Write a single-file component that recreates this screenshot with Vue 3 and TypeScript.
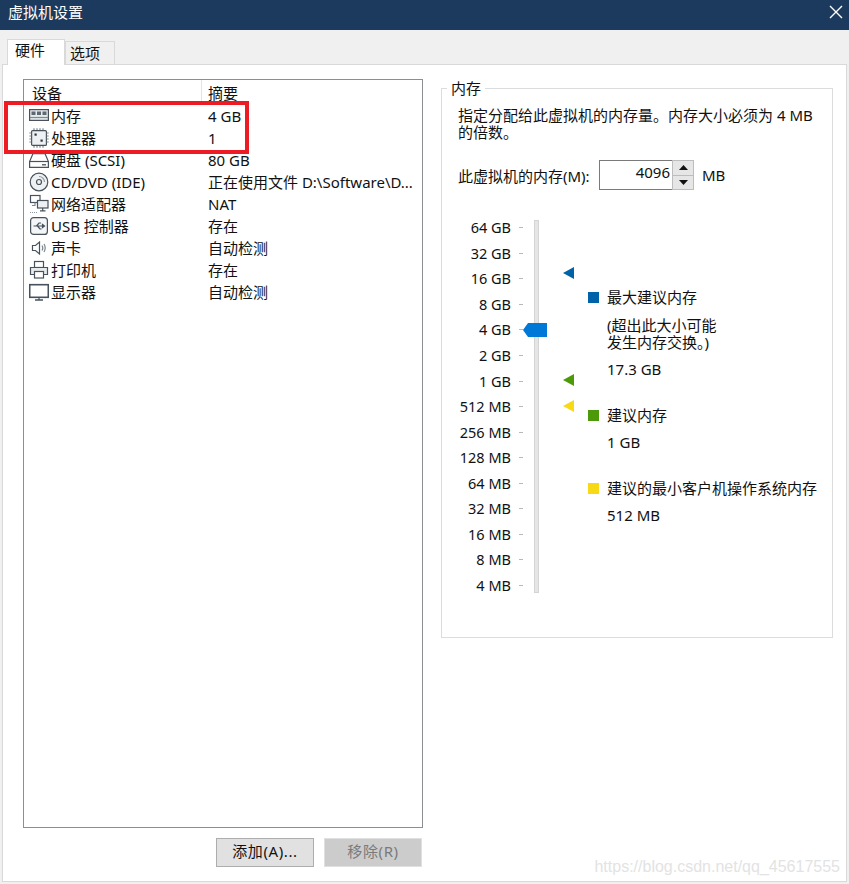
<script setup lang="ts">
interface Device { name: string; summary: string; icon: string }
const devices: Device[] = [
  { name: '内存', summary: '4 GB', icon: 'mem' },
  { name: '处理器', summary: '1', icon: 'cpu' },
  { name: '硬盘 (SCSI)', summary: '80 GB', icon: 'disk' },
  { name: 'CD/DVD (IDE)', summary: '正在使用文件 D:\\Software\\D...', icon: 'cd' },
  { name: '网络适配器', summary: 'NAT', icon: 'net' },
  { name: 'USB 控制器', summary: '存在', icon: 'usb' },
  { name: '声卡', summary: '自动检测', icon: 'sound' },
  { name: '打印机', summary: '存在', icon: 'print' },
  { name: '显示器', summary: '自动检测', icon: 'mon' },
]
const scale: string[] = ['64 GB','32 GB','16 GB','8 GB','4 GB','2 GB','1 GB','512 MB','256 MB','128 MB','64 MB','32 MB','16 MB','8 MB','4 MB']
</script>

<template>
  <div class="win">
    <header class="title">
      <span>虚拟机设置</span>
      <svg class="close" width="14" height="14" viewBox="0 0 14 14"><path d="M1 1L13 13M13 1L1 13" stroke="#fff" stroke-width="1.4" fill="none"/></svg>
    </header>
    <nav class="tabs">
      <div class="tab active">硬件</div>
      <div class="tab">选项</div>
    </nav>
    <main class="panel">
      <section class="left">
        <div class="list">
          <div class="head">
            <div class="h1">设备</div>
            <div class="h2">摘要</div>
          </div>
          <div v-for="d in devices" :key="d.name" class="row">
            <svg class="ico" width="20" height="20" viewBox="0 0 20 20" fill="none" stroke="#47525c" stroke-width="1.2">
              <template v-if="d.icon === 'mem'">
                <rect x="0.6" y="3.6" width="18.8" height="10.8" fill="#e6eaed"/>
                <rect x="2.5" y="5.5" width="4" height="3.5" fill="#5d6872" stroke="none"/>
                <rect x="8" y="5.5" width="4" height="3.5" fill="#5d6872" stroke="none"/>
                <rect x="13.5" y="5.5" width="4" height="3.5" fill="#5d6872" stroke="none"/>
                <path d="M1 11.5H19" stroke="#7f8992"/>
              </template>
              <template v-else-if="d.icon === 'cpu'">
                <rect x="2.6" y="2.6" width="14.8" height="14.8" rx="1" fill="#eef1f3"/>
                <path d="M5 0.3V2M8 0.3V2M11 0.3V2M14 0.3V2M5 18V19.7M8 18V19.7M11 18V19.7M14 18V19.7M0.3 5H2.5M0.3 8H2.5M0.3 11H2.5M0.3 14H2.5M17.5 5H19.7M17.5 8H19.7M17.5 11H19.7M17.5 14H19.7" stroke="#7c8790"/>
                <rect x="5.5" y="5.5" width="2.2" height="2.2" fill="#2c343b" stroke="none"/>
                <rect x="11.5" y="11.5" width="2.2" height="2.2" fill="#2c343b" stroke="none"/>
              </template>
              <template v-else-if="d.icon === 'disk'">
                <path d="M4 3.6H16L19.4 11.5V17.4H0.6V11.5Z" fill="#fff"/>
                <path d="M0.6 11.5H19.4"/>
                <rect x="13" y="14" width="4" height="1.5" fill="#5d6872" stroke="none"/>
              </template>
              <template v-else-if="d.icon === 'cd'">
                <circle cx="10" cy="10" r="8.8" fill="#eef1f3"/>
                <circle cx="10" cy="10" r="2.5"/>
                <path d="M10 4.5A5.5 5.5 0 0 1 15.5 10" stroke="#8f99a1"/>
              </template>
              <template v-else-if="d.icon === 'net'">
                <rect x="1.5" y="1.5" width="9.5" height="7" fill="#fff"/>
                <path d="M6 8.5V11.5H3" stroke="#7c8790"/>
                <rect x="8.5" y="6.5" width="10.5" height="7.5" fill="#eef1f3"/>
                <path d="M13.7 14V16.5M11 16.8H16.5"/>
                <path d="M1 18.5H9" stroke="#8f99a1" stroke-dasharray="1 1"/>
              </template>
              <template v-else-if="d.icon === 'usb'">
                <rect x="1.6" y="1.6" width="16.8" height="16.8" rx="3" fill="#f3f5f6"/>
                <path d="M4.5 10H15.5M15.5 10L13.5 8.5V11.5ZM7.5 10L10 7H12M8.5 10L11 13H12.5"/>
              </template>
              <template v-else-if="d.icon === 'sound'">
                <path d="M3.5 7.5H6.5L10.5 4V16L6.5 12.5H3.5Z" fill="#fff"/>
                <path d="M13 7.5C14 9 14 11 13 12.5M15 6C16.5 8.5 16.5 11.5 15 14" stroke="#7c8790"/>
              </template>
              <template v-else-if="d.icon === 'print'">
                <rect x="5.5" y="1.5" width="9" height="6" fill="#fff"/>
                <path d="M5 14.5H1.5V7.5H18.5V14.5H15" fill="#e6eaed"/>
                <rect x="5.5" y="11.5" width="9" height="6.5" fill="#fff"/>
              </template>
              <template v-else>
                <rect x="0.7" y="2.7" width="18.6" height="12.6" stroke-width="1.6" fill="#fff"/>
                <path d="M6 18H14" stroke-width="1.5"/>
                <path d="M10 16V18"/>
              </template>
            </svg>
            <span class="name">{{ d.name }}</span>
            <span class="sum">{{ d.summary }}</span>
          </div>
        </div>
        <div class="btns">
          <button class="btn">添加(A)...</button>
          <button class="btn off">移除(R)</button>
        </div>
      </section>

      <fieldset class="group">
        <legend>内存</legend>
        <p class="desc">指定分配给此虚拟机的内存量。内存大小必须为 4 MB<br>的倍数。</p>
        <div class="spin-row">
          <span class="spin-label">此虚拟机的内存(M):</span>
          <div class="spin">
            <span class="spin-val">4096</span>
            <div class="arrows">
              <div class="arrow"><svg width="9" height="5" viewBox="0 0 9 5"><path d="M4.5 0L9 5H0Z" fill="#111"/></svg></div>
              <div class="arrow"><svg width="9" height="5" viewBox="0 0 9 5"><path d="M0 0H9L4.5 5Z" fill="#111"/></svg></div>
            </div>
          </div>
          <span class="unit">MB</span>
        </div>
        <div class="mem">
          <ul class="scale">
            <li v-for="s in scale" :key="s"><span>{{ s }}</span><i class="tick"></i></li>
          </ul>
          <div class="track">
            <svg class="mark m-thumb" width="24" height="14" viewBox="0 0 24 14"><path d="M0 7L5 0H24V14H5Z" fill="#0078d7"/></svg>
            <svg class="mark m-max" width="11" height="12" viewBox="0 0 11 12"><path d="M0 6L11 0V12Z" fill="#0063a8"/></svg>
            <svg class="mark m-rec" width="11" height="12" viewBox="0 0 11 12"><path d="M0 6L11 0V12Z" fill="#4c9a0a"/></svg>
            <svg class="mark m-min" width="11" height="12" viewBox="0 0 11 12"><path d="M0 6L11 0V12Z" fill="#f7d916"/></svg>
          </div>
          <div class="legend">
            <div class="lg first"><i class="sq blue"></i>最大建议内存</div>
            <div class="note">(超出此大小可能<br>发生内存交换。)</div>
            <div class="val v1">17.3 GB</div>
            <div class="lg second"><i class="sq green"></i>建议内存</div>
            <div class="val v2">1 GB</div>
            <div class="lg third"><i class="sq yellow"></i>建议的最小客户机操作系统内存</div>
            <div class="val v2">512 MB</div>
          </div>
        </div>
      </fieldset>
      <div class="redbox"></div>
      <div class="mark-text">https://blog.csdn.net/qq_45617555</div>
    </main>
  </div>
</template>

<style>
html, body { margin: 0; background: #f0f0f0; }
</style>

<style scoped>
.win {
  width: 849px;
  height: 884px;
  background: #f0f0f0;
  font-family: "Noto Sans", "Noto Sans CJK SC", sans-serif;
  font-size: 15px;
  color: #111;
  display: flex;
  flex-direction: column;
  overflow: hidden;
}
.title {
  height: 30px;
  box-sizing: border-box;
  flex: none;
  background: #1b3a5e;
  color: #fff;
  display: flex;
  align-items: center;
  justify-content: space-between;
  padding: 0 6px 7px 8px;
  font-size: 15px;
  line-height: 22px;
}
.tabs {
  height: 34px;
  flex: none;
  display: flex;
  align-items: flex-end;
  padding-left: 7px;
  position: relative;
}
.tab {
  width: 50px;
  height: 23px;
  box-sizing: border-box;
  border: 1px solid #d9d9d9;
  border-bottom: 0;
  background: #f0f0f0;
  text-align: center;
  line-height: 22px;
  padding-right: 10px;
}
.tab.active {
  width: 58px;
  height: 26px;
  background: #fff;
  line-height: 21px;
  margin-bottom: -1px;
  position: relative;
  z-index: 1;
  padding-right: 12px;
}
.panel {
  position: relative;
  margin: 0 2px 2px 2px;
  flex: 1;
  background: #fff;
  border: 1px solid #d9d9d9;
  box-sizing: border-box;
  display: flex;
  padding: 14px 13px 0 20px;
  gap: 18px;
}
.left { width: 400px; flex: none; }
.list {
  height: 749px;
  box-sizing: border-box;
  border: 1px solid #8a8f96;
  background: #fff;
}
.head {
  height: 25px;
  display: flex;
  line-height: 26px;
}
.h1 { width: 178px; padding-left: 8px; box-sizing: border-box; border-right: 1px solid #e3e3e3; }
.h2 { padding-left: 6px; }
.row {
  height: 22px;
  display: flex;
  align-items: center;
  line-height: 22px;
  padding-left: 5px;
  white-space: nowrap;
}
.ico { flex: none; margin-right: 2px; }
.name { width: 157px; flex: none; }
.sum { color: #111; }
.btns {
  display: flex;
  justify-content: flex-end;
  gap: 10px;
  margin-top: 10px;
  margin-right: 1px;
}
.btn {
  width: 98px;
  height: 29px;
  padding: 0 0 4px;
  box-sizing: border-box;
  font: inherit;
  letter-spacing: 0.6px;
  line-height: 22px;
  color: #111;
  background: #e1e1e1;
  border: 1px solid #adadad;
  border-radius: 0;
}
.btn.off {
  background: #cccccc;
  border-color: #e0e0e0;
  color: #7a7a7a;
}
.group {
  margin: -1px 0 0 0;
  padding: 0 0 0 16px;
  width: 392px;
  height: 560px;
  box-sizing: border-box;
  flex: none;
  border: 1px solid #dcdcdc;
  min-width: 0;
}
.group legend {
  padding: 0 4px;
  margin-left: -11px;
  line-height: 20px;
}
.desc {
  margin: 0;
  padding-top: 9px;
  line-height: 17px;
  white-space: nowrap;
}
.spin-row {
  display: flex;
  align-items: center;
  margin-top: 19px;
  height: 30px;
}
.spin-label { width: 141px; flex: none; }
.spin {
  width: 95px;
  height: 30px;
  box-sizing: border-box;
  border: 1px solid #7a7a7a;
  display: flex;
  background: #fff;
}
.spin-val {
  flex: 1;
  text-align: right;
  line-height: 22px;
  padding-right: 2px;
}
.arrows {
  width: 20px;
  margin: -1px -1px -1px 0;
  display: flex;
  flex-direction: column;
  background: #bdbdbd;
  gap: 1px;
  padding: 1px;
}
.arrow {
  flex: 1;
  background: #e6e6e6;
  display: flex;
  align-items: center;
  justify-content: center;
}
.unit { margin-left: 8px; }
.mem {
  display: flex;
  margin-top: 30px;
  height: 373px;
}
.scale {
  list-style: none;
  margin: -5px 0 0;
  padding: 0;
  width: 65px;
  flex: none;
  font-size: 14.5px;
}
.scale li {
  height: 25.55px;
  line-height: 15px;
  display: flex;
  justify-content: flex-end;
  align-items: center;
  white-space: nowrap;
  position: relative;
}
.scale li span { margin-right: 8px; }
.tick {
  width: 4px;
  height: 1px;
  background: #b8b8b8;
  flex: none;
}
.track {
  position: relative;
  margin-left: 11px;
  width: 5px;
  height: 373px;
  box-sizing: border-box;
  background: #e4e6e6;
  border: 1px solid #d4d4d4;
  flex: none;
}
.mark { position: absolute; display: block; }
.m-thumb { left: -12px; top: 102px; }
.m-max { left: 28px; top: 46px; }
.m-rec { left: 28px; top: 153px; }
.m-min { left: 28px; top: 179px; }
.legend {
  margin-left: 49px;
  padding-top: 69px;
  white-space: nowrap;
  line-height: 17px;
}
.lg { display: flex; align-items: center; }
.sq { width: 11px; height: 11px; margin-right: 8px; flex: none; }
.blue { background: #0063a8; }
.green { background: #4c9a0a; }
.yellow { background: #f7d916; }
.note { margin-left: 19px; margin-top: 11px; }
.val { margin-left: 19px; }
.v1 { margin-top: 10px; }
.v2 { margin-top: 10px; }
.second { margin-top: 29px; }
.third { margin-top: 29px; }
.redbox {
  position: absolute;
  left: 1px;
  top: 36px;
  width: 245px;
  height: 53px;
  box-sizing: border-box;
  border: 4px solid #ed1c24;
  pointer-events: none;
}
.mark-text {
  position: absolute;
  right: 6px;
  bottom: 5px;
  font-family: "Liberation Sans", sans-serif;
  font-size: 16px;
  line-height: 18px;
  color: #e3e3e3;
  white-space: nowrap;
}
</style>
